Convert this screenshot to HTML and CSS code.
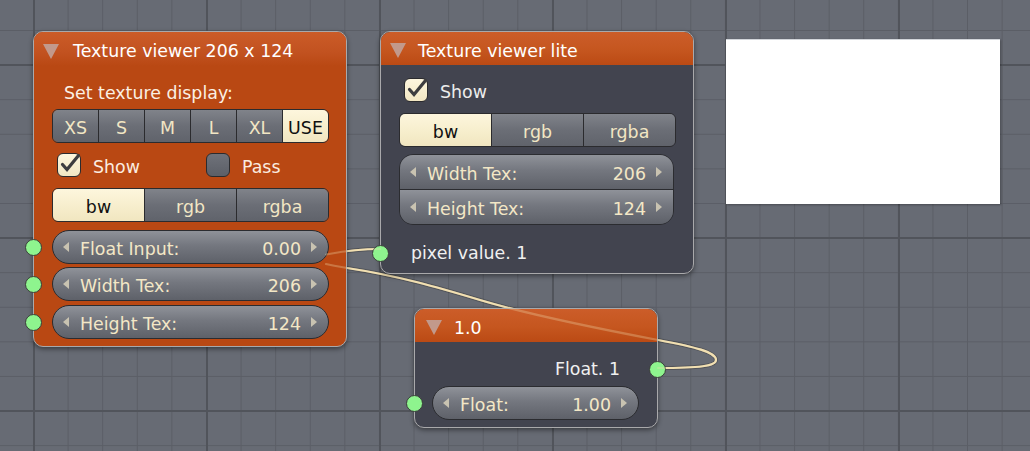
FILE: index.html
```html
<!DOCTYPE html>
<html>
<head>
<meta charset="utf-8">
<link rel="stylesheet" href="styles.css">
</head>
<body>
<div class="canvas">
  <svg class="wires" width="1030" height="451" viewBox="0 0 1030 451">
    <path class="wire-shadow" d="M 380 249 C 360 249 345 251 329 254 L 315 256"/>
    <path class="wire" d="M 380 249 C 360 249 345 251 329 254 L 315 256"/>
    <path class="wire-shadow" d="M 658 368 C 700 368 716 366 716 360 C 716 352 695 347 658 340 C 600 329 520 312 480 300 C 440 288 400 276 347 268 C 335 266 325 264 315 262"/>
    <path class="wire" d="M 658 368 C 700 368 716 366 716 360 C 716 352 695 347 658 340 C 600 329 520 312 480 300 C 440 288 400 276 347 268 C 335 266 325 264 315 262"/>
  </svg>

  <div class="node n1">
    <div class="hdr"><span class="tri"></span><span class="title">Texture viewer 206 x 124</span></div>
    <div class="body">
      <div class="label">Set texture display:</div>
      <div class="seg seg-size">
        <span class="btn">XS</span><span class="btn">S</span><span class="btn">M</span><span class="btn">L</span><span class="btn">XL</span><span class="btn on">USE</span>
      </div>
      <div class="checks">
        <div class="chk-item">
          <span class="chk on"><svg viewBox="0 0 24 24" width="24" height="24"><path d="M5.5 11.5 L10 16.5 L21.5 2.5"/></svg></span>
          <span class="chk-label">Show</span>
        </div>
        <div class="chk-item">
          <span class="chk"></span>
          <span class="chk-label">Pass</span>
        </div>
      </div>
      <div class="seg seg-mode">
        <span class="btn on">bw</span><span class="btn">rgb</span><span class="btn">rgba</span>
      </div>
      <div class="pill-row first">
        <span class="sock"></span>
        <div class="pill"><span class="arr-l"></span><span class="plabel">Float Input:</span><span class="pval">0.00</span><span class="arr-r"></span></div>
      </div>
      <div class="pill-row">
        <span class="sock"></span>
        <div class="pill"><span class="arr-l"></span><span class="plabel">Width Tex:</span><span class="pval">206</span><span class="arr-r"></span></div>
      </div>
      <div class="pill-row">
        <span class="sock"></span>
        <div class="pill"><span class="arr-l"></span><span class="plabel">Height Tex:</span><span class="pval">124</span><span class="arr-r"></span></div>
      </div>
    </div>
  </div>

  <div class="node n2">
    <div class="hdr"><span class="tri"></span><span class="title">Texture viewer lite</span></div>
    <div class="body">
      <div class="checks single">
        <div class="chk-item">
          <span class="chk on"><svg viewBox="0 0 24 24" width="24" height="24"><path d="M5.5 11.5 L10 16.5 L21.5 2.5"/></svg></span>
          <span class="chk-label">Show</span>
        </div>
      </div>
      <div class="seg seg-mode">
        <span class="btn on">bw</span><span class="btn">rgb</span><span class="btn">rgba</span>
      </div>
      <div class="pill-group">
        <div class="gpill top"><span class="arr-l"></span><span class="plabel">Width Tex:</span><span class="pval">206</span><span class="arr-r"></span></div>
        <div class="gpill bottom"><span class="arr-l"></span><span class="plabel">Height Tex:</span><span class="pval">124</span><span class="arr-r"></span></div>
      </div>
      <div class="out-row">
        <span class="sock"></span>
        <span class="plain">pixel value. 1</span>
      </div>
    </div>
  </div>

  <div class="node n3">
    <div class="hdr"><span class="tri"></span><span class="title">1.0</span></div>
    <div class="body">
      <div class="outval">
        <span class="plain">Float. 1</span>
        <span class="sock right"></span>
      </div>
      <div class="pill-row">
        <span class="sock"></span>
        <div class="pill"><span class="arr-l"></span><span class="plabel">Float:</span><span class="pval">1.00</span><span class="arr-r"></span></div>
      </div>
    </div>
  </div>

  <div class="preview"></div>

  <svg class="wires over" width="1030" height="451" viewBox="0 0 1030 451">
    <path class="wire" d="M 380 249 C 360 249 345 251 329 254 L 326 254.5"/>
    <path class="wire" d="M 658 368 C 700 368 716 366 716 360 C 716 352 695 347 658 340 C 600 329 520 312 480 300 C 440 288 400 276 347 268 C 335 266 330 265 326 264"/>
  </svg>
</div>
</body>
</html>
```

FILE: styles.css
```css
html, body {
  margin: 0;
  padding: 0;
}

body {
  width: 1030px;
  height: 451px;
  overflow: hidden;
  font-family: "DejaVu Sans", "Liberation Sans", sans-serif;
  font-size: 17.4px;
}

.canvas {
  position: relative;
  width: 1030px;
  height: 451px;
  overflow: hidden;
  background-color: #676b74;
  background-image:
    linear-gradient(to right, #51545b 0, #51545b 2px, transparent 2px),
    linear-gradient(to bottom, #51545b 0, #51545b 2px, transparent 2px),
    linear-gradient(to right, #5b5e66 0, #5b5e66 1px, transparent 1px),
    linear-gradient(to bottom, #5b5e66 0, #5b5e66 1px, transparent 1px);
  background-size: 173px 173px, 173px 173px, 34.6px 34.6px, 34.6px 34.6px;
  background-position: 33px 0, 0 64px, 33px 0, 0 30px;
}

/* wires */
.wires {
  position: absolute;
  left: 0;
  top: 0;
  z-index: 0;
  pointer-events: none;
}
.wires.over {
  z-index: 3;
  opacity: 0.3;
}
.wire {
  fill: none;
  stroke: #f2e0b2;
  stroke-width: 2.2;
  stroke-linecap: round;
}
.wire-shadow {
  fill: none;
  stroke: rgba(40, 40, 40, 0.35);
  stroke-width: 4;
}

/* nodes */
.node {
  position: absolute;
  z-index: 1;
  box-sizing: border-box;
  border: 1px solid #a9a9ab;
  border-radius: 10px;
  box-shadow: 0 2px 5px rgba(0, 0, 0, 0.45);
}

.n1 {
  left: 33px;
  top: 31px;
  width: 314px;
  height: 316px;
  background: #b94813;
}
.n2 {
  left: 380px;
  top: 31px;
  width: 314px;
  height: 243px;
  background: #42444f;
}
.n3 {
  left: 414px;
  top: 308px;
  width: 244px;
  height: 120px;
  background: #42444f;
}

.hdr {
  height: 34px;
  display: flex;
  align-items: center;
  border-radius: 9px 9px 0 0;
  background: linear-gradient(#cc5d29, #c5561f 55%, #bb4a14);
  color: #ffffff;
}
.n2 .hdr, .n3 .hdr {
  height: 33px;
}
.n1 .hdr {
  background: linear-gradient(#cb5c28, #c25220 60%, #b94813);
}

.tri {
  width: 0;
  height: 0;
  border-left: 8px solid transparent;
  border-right: 8px solid transparent;
  border-top: 15px solid #c2998b;
  margin-left: 9px;
  margin-right: 14px;
  margin-top: 4px;
}
.n2 .tri {
  margin-right: 12px;
}
.n3 .tri {
  margin-left: 11px;
  margin-right: 12px;
}

.title {
  white-space: nowrap;
  padding-top: 4px;
}

.body {
  padding: 0 17px 0 18px;
}

.label {
  margin-top: 17px;
  padding-left: 12px;
  height: 20px;
  line-height: 20px;
  color: #fbf0e4;
}

/* segmented buttons */
.seg {
  display: flex;
  height: 34px;
  box-sizing: border-box;
  border: 1px solid #2b2b2e;
  border-radius: 6px;
  overflow: hidden;
}
.seg-size {
  margin-top: 6px;
}
.n1 .seg-mode {
  margin-top: 12px;
}
.n2 .seg-mode {
  margin-top: 12px;
}
.btn {
  flex: 1 1 0;
  display: flex;
  align-items: center;
  justify-content: center;
  padding-top: 3px;
  box-sizing: border-box;
  background: linear-gradient(#80838a, #6b6e76 50%, #60636b);
  color: #f2e6c4;
  border-left: 1px solid #2b2b2e;
}
.btn:first-child {
  border-left: none;
}
.btn.on {
  background: linear-gradient(#fdf6dd, #f6edcb 60%, #f1e6c0);
  color: #111111;
}

/* checkboxes */
.checks {
  display: grid;
  grid-template-columns: 149px 1fr;
  margin-top: 9px;
  height: 24px;
}
.checks.single {
  grid-template-columns: 1fr;
  margin-top: 12px;
}
.chk-item {
  display: flex;
  align-items: center;
  padding-left: 5px;
}
.chk {
  position: relative;
  width: 24px;
  height: 24px;
  box-sizing: border-box;
  border: 1px solid #2b2b2e;
  border-radius: 6px;
  background: linear-gradient(#6f727a, #5c5f67);
  flex: none;
}
.chk.on {
  background: linear-gradient(#fdf6de, #f2e7c3);
}
.chk svg {
  position: absolute;
  left: -1px;
  top: -1px;
  overflow: visible;
}
.chk svg path {
  fill: none;
  stroke: #3d3d3f;
  stroke-width: 3.2;
  stroke-linecap: round;
  stroke-linejoin: miter;
}
.chk-label {
  margin-left: 12px;
  padding-top: 5px;
  color: #fbece0;
}
.n2 .chk-label {
  color: #ececec;
}

/* pills */
.pill-row {
  position: relative;
  margin-top: 3px;
}
.n1 .pill-row:last-child {
  margin-top: 4px;
}
.pill-row.first {
  margin-top: 8px;
}
.pill, .gpill {
  height: 34px;
  box-sizing: border-box;
  display: flex;
  align-items: center;
  padding: 0 11px 0 10px;
  color: #f3e7c6;
  background: linear-gradient(#8f9299, #74777f 45%, #5e6169);
}
.pill {
  border: 1px solid #2b2c30;
  border-radius: 17px;
}
.arr-l {
  width: 0;
  height: 0;
  border-top: 5px solid transparent;
  border-bottom: 5px solid transparent;
  border-right: 6px solid #c9c3b1;
  margin-right: 11px;
}
.arr-r {
  width: 0;
  height: 0;
  border-top: 5px solid transparent;
  border-bottom: 5px solid transparent;
  border-left: 6px solid #c9c3b1;
  margin-left: 10px;
}
.plabel {
  white-space: nowrap;
  padding-top: 4px;
}
.pval {
  margin-left: auto;
  padding-top: 4px;
}

.pill-group {
  margin-top: 7px;
  border: 1px solid #2b2c30;
  border-radius: 14px;
  overflow: hidden;
  margin-right: 2px;
}
.gpill {
  height: 34px;
}
.gpill.top {
  border-bottom: 1px solid #2b2c30;
  height: 35px;
}

/* sockets */
.sock {
  position: absolute;
  z-index: 2;
  left: -27px;
  top: 50%;
  width: 17px;
  height: 17px;
  margin-top: -8.5px;
  box-sizing: border-box;
  border-radius: 50%;
  background: #8ef48e;
  border: 1px solid #3b3d3b;
}

.out-row {
  position: relative;
  margin-top: 18px;
  height: 20px;
  line-height: 20px;
  padding-left: 12px;
}
.n2 .out-row .sock {
  left: -27px;
}
.plain {
  color: #f0f0f0;
}

.n3 .body {
  padding: 0 18px 0 17px;
}
.outval {
  position: relative;
  margin-top: 17px;
  height: 20px;
  line-height: 20px;
  text-align: right;
  padding-right: 19px;
}
.sock.right {
  left: auto;
  right: -27px;
}
.n3 .pill-row {
  margin-top: 7px;
}
.n3 .pill-row .sock {
  left: -26px;
}

/* preview image */
.preview {
  position: absolute;
  z-index: 1;
  left: 726px;
  top: 39px;
  width: 274px;
  height: 165px;
  box-sizing: border-box;
  background: #ffffff;
  border-top: 1px solid #d2d5da;
  box-shadow: 1px 1px 2px rgba(0, 0, 0, 0.3);
}
```
